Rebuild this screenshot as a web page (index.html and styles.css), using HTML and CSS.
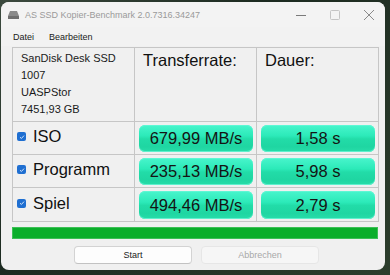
FILE: index.html
```html
<!DOCTYPE html>
<html>
<head>
<meta charset="utf-8">
<link rel="stylesheet" href="styles.css">
</head>
<body>
<div class="window">
  <div class="titlebar">
    <svg class="appicon" width="11" height="9" viewBox="0 0 11 9"><path d="M2 1 H9 L11 6 V9 H0 V6 Z" fill="#8a8a8a"/><rect x="0" y="6" width="11" height="3" fill="#6e6e6e"/></svg>
    <span class="title">AS SSD Kopier-Benchmark 2.0.7316.34247</span>
    <div class="controls">
      <svg width="12" height="12" viewBox="0 0 12 12"><path d="M1 6.5 H11" stroke="#7a7a7a" stroke-width="1"/></svg>
      <svg width="12" height="12" viewBox="0 0 12 12"><rect x="1.5" y="1.5" width="9" height="9" rx="1" fill="none" stroke="#c4c4c4" stroke-width="1"/></svg>
      <svg width="12" height="12" viewBox="0 0 12 12"><path d="M1 1 L11 11 M11 1 L1 11" stroke="#8a8a8a" stroke-width="1"/></svg>
    </div>
  </div>
  <div class="menubar">
    <span>Datei</span>
    <span>Bearbeiten</span>
  </div>
  <div class="table">
    <div class="cell info">
      <div>SanDisk Desk SSD</div>
      <div>1007</div>
      <div>UASPStor</div>
      <div>7451,93 GB</div>
    </div>
    <div class="cell head">Transferrate:</div>
    <div class="cell head">Dauer:</div>

    <div class="cell label"><span class="check"><svg width="8" height="8" viewBox="0 0 8 8"><path d="M2 4.2 L3.4 5.5 L6 2.6" fill="none" stroke="#cfe2fa" stroke-width="1"/></svg></span>ISO</div>
    <div class="cell val"><div class="pill">679,99 MB/s</div></div>
    <div class="cell val"><div class="pill">1,58 s</div></div>

    <div class="cell label"><span class="check"><svg width="8" height="8" viewBox="0 0 8 8"><path d="M2 4.2 L3.4 5.5 L6 2.6" fill="none" stroke="#cfe2fa" stroke-width="1"/></svg></span>Programm</div>
    <div class="cell val"><div class="pill">235,13 MB/s</div></div>
    <div class="cell val"><div class="pill">5,98 s</div></div>

    <div class="cell label"><span class="check"><svg width="8" height="8" viewBox="0 0 8 8"><path d="M2 4.2 L3.4 5.5 L6 2.6" fill="none" stroke="#cfe2fa" stroke-width="1"/></svg></span>Spiel</div>
    <div class="cell val"><div class="pill">494,46 MB/s</div></div>
    <div class="cell val"><div class="pill">2,79 s</div></div>
  </div>
  <div class="progress"></div>
  <div class="buttons">
    <div class="btn">Start</div>
    <div class="btn disabled">Abbrechen</div>
  </div>
</div>
</body>
</html>
```
FILE: styles.css
```css
html, body {
  margin: 0;
  padding: 0;
}
body {
  width: 390px;
  height: 275px;
  overflow: hidden;
  background: linear-gradient(135deg, #3c4a3e 0%, #1c2a20 40%, #2c3d2c 100%);
  font-family: "Liberation Sans", Arial, sans-serif;
}
.window {
  margin: 2px 0 0 1px;
  width: 384px;
  height: 268px;
  background: #f0f0f0;
  border-radius: 8px;
  overflow: hidden;
  display: flex;
  flex-direction: column;
}
.titlebar {
  height: 25px;
  display: flex;
  align-items: center;
  background: #f3f3f3;
  padding-left: 7px;
}
.appicon {
  margin-right: 6px;
}
.title {
  font-size: 9px;
  color: #9a9a9a;
}
.controls {
  margin-left: auto;
  display: flex;
  align-items: center;
  gap: 22px;
  margin-right: 10px;
}
.menubar {
  height: 19px;
  display: flex;
  align-items: center;
  gap: 15px;
  padding-left: 12px;
  font-size: 9px;
  color: #1a1a1a;
  background: #f2f2f2;
}
.table {
  margin: 1px 0 0 11px;
  width: 366px;
  display: grid;
  grid-template-columns: 122px 122px 122px;
  grid-template-rows: 74px 33px 33px 34px;
  border-top: 1px solid #c6c6c6;
  border-left: 1px solid #c6c6c6;
}
.cell {
  border-right: 1px solid #c6c6c6;
  border-bottom: 1px solid #c6c6c6;
  box-sizing: border-box;
  background: #f0f0f0;
}
.info {
  padding: 2px 0 0 8px;
  font-size: 11px;
  line-height: 17px;
  color: #1a1a1a;
}
.head {
  padding: 3px 0 0 8px;
  font-size: 16.5px;
  color: #111;
}
.label {
  display: flex;
  align-items: center;
  font-size: 16.5px;
  color: #111;
  padding-left: 4px;
  padding-bottom: 3px;
}
.check {
  width: 9px;
  height: 9px;
  background: #1f6fd1;
  border-radius: 2px;
  margin-right: 7px;
  display: flex;
  align-items: center;
  justify-content: center;
}
.check svg {
  display: block;
}
.val {
  padding: 3px 3px 2px 4px;
}
.pill {
  height: 100%;
  border-radius: 6px;
  background: linear-gradient(#48f5cc 0%, #2ceab9 40%, #22dca8 52%, #1fd6a2 80%, #27dda9 100%);
  box-shadow: inset 0 -1px 0 #5ff0cd, inset 0 1px 0 #5ef7d4;
  display: flex;
  align-items: center;
  justify-content: center;
  font-size: 16.5px;
  color: #141414;
}
.progress {
  margin: 5px 0 0 11px;
  width: 366px;
  height: 12px;
  background: #0aae2a;
  border: 1px solid #3cbf55;
  box-sizing: border-box;
}
.buttons {
  margin-top: 7px;
  display: flex;
  gap: 9px;
  padding-left: 73px;
}
.btn {
  width: 118px;
  height: 18px;
  box-sizing: border-box;
  border: 1px solid #d3d3d3;
  border-bottom-color: #c2c2c2;
  border-radius: 4px;
  background: #fdfdfd;
  font-size: 9px;
  color: #1a1a1a;
  display: flex;
  align-items: center;
  justify-content: center;
}
.btn.disabled {
  background: #f6f6f6;
  border-color: #e6e6e6;
  color: #a8a8a8;
}
```
